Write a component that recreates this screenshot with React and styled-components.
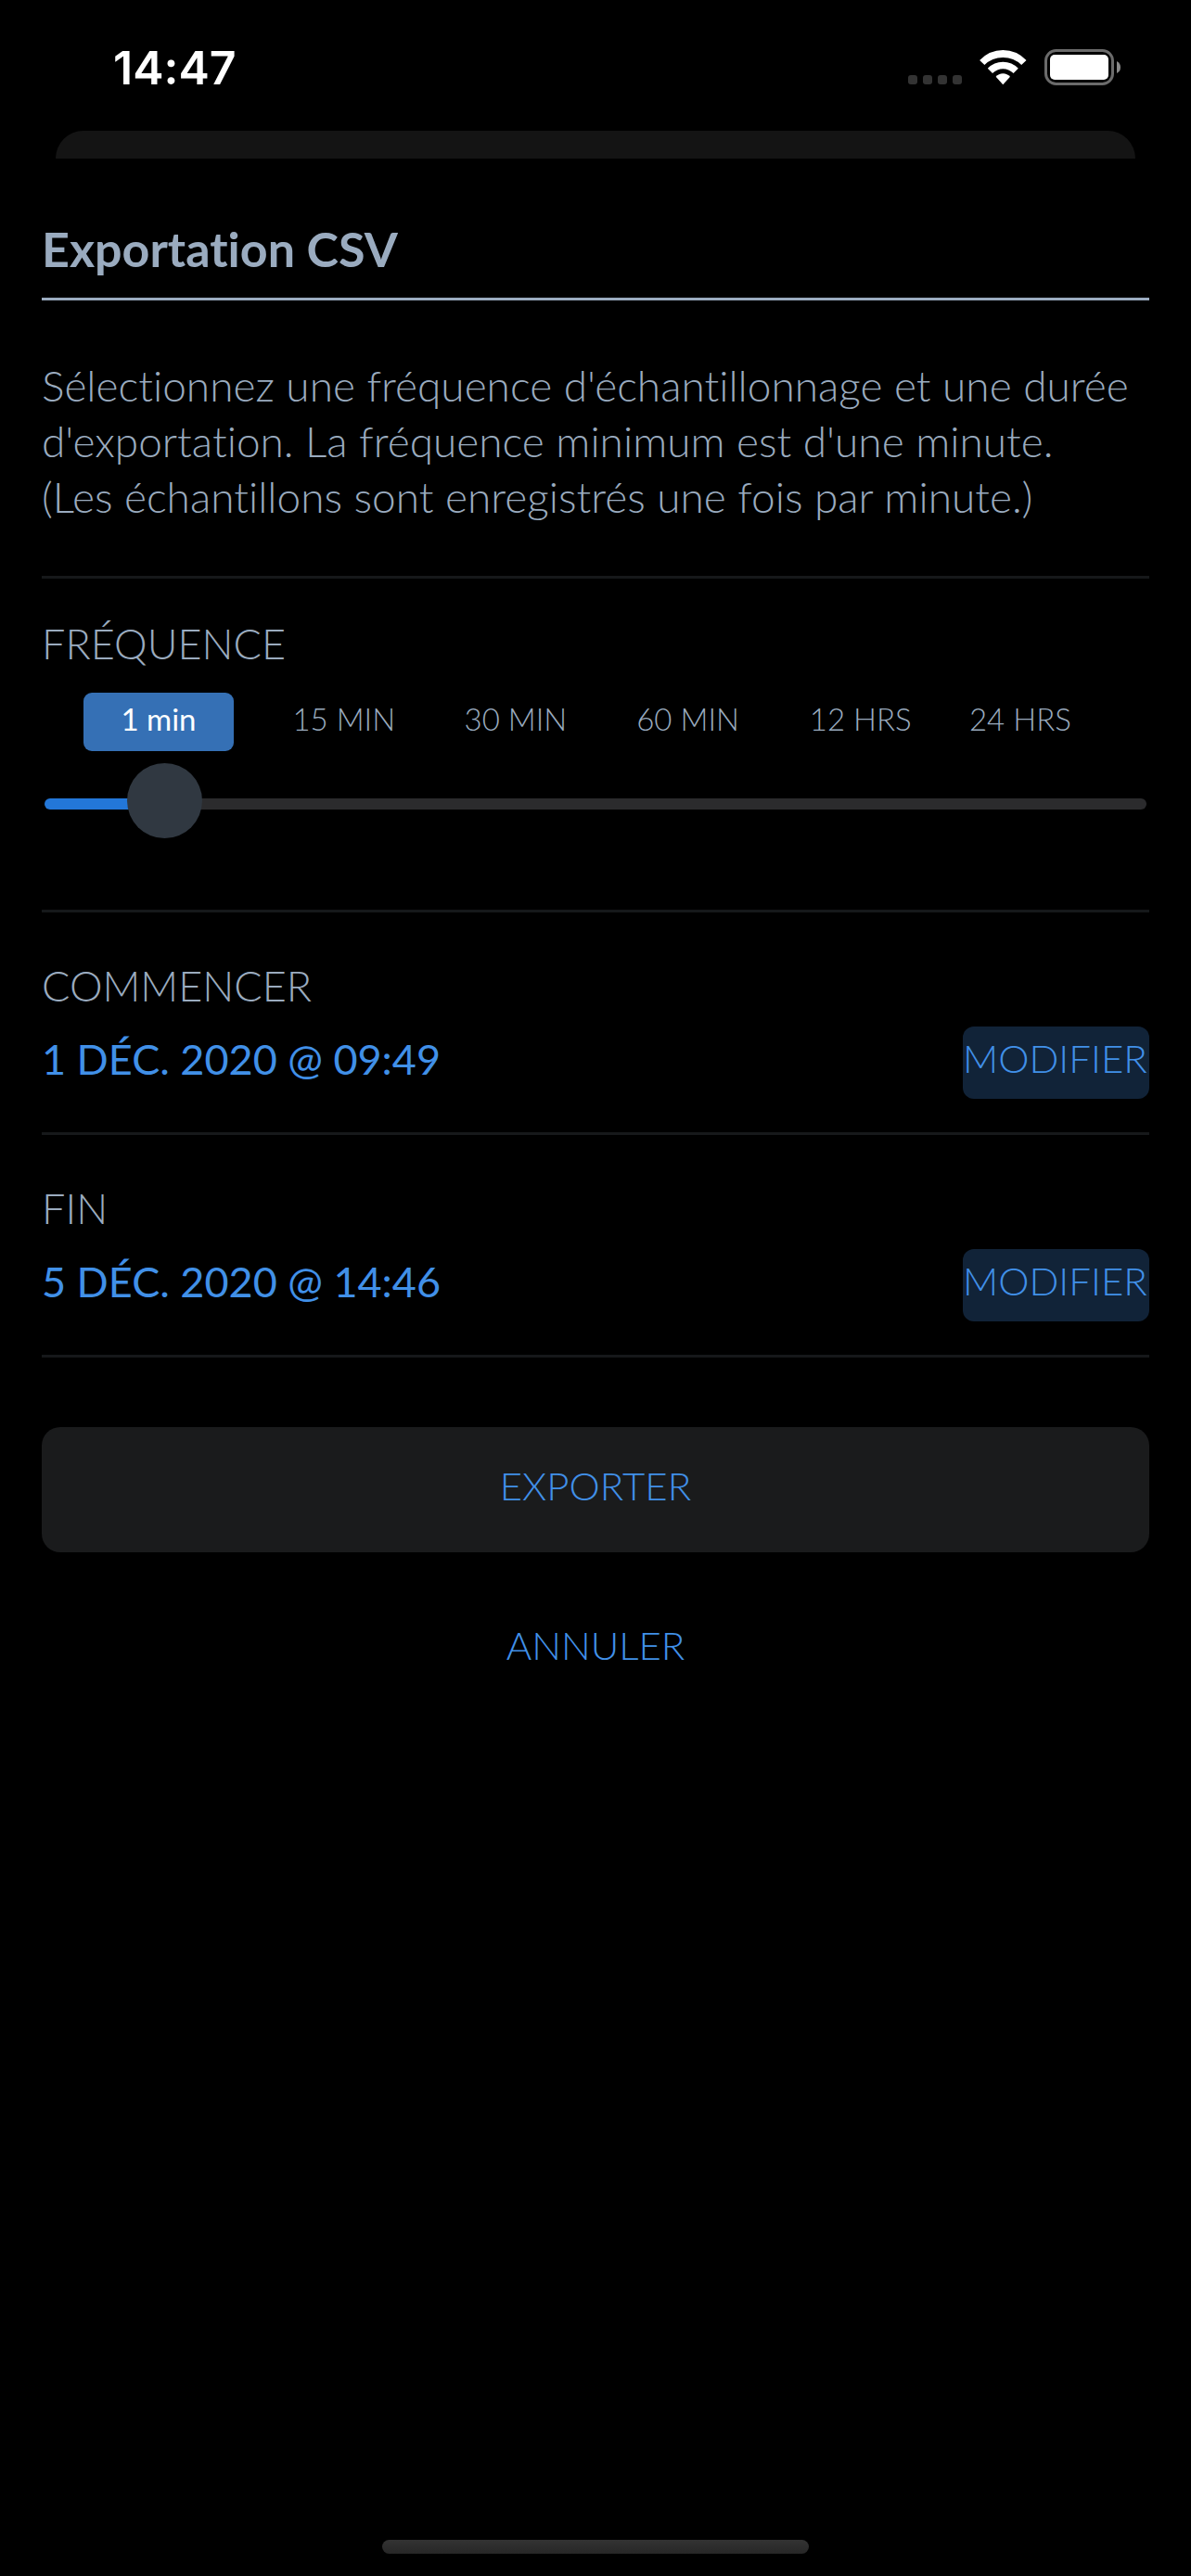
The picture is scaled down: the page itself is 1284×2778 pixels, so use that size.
import React from 'react'
import styled, { createGlobalStyle } from 'styled-components'

const frequencies = [
    { label: '1 min', value: 8 },
    { label: '15 MIN', value: 25 },
    { label: '30 MIN', value: 42 },
    { label: '60 MIN', value: 59 },
    { label: '12 HRS', value: 76 },
    { label: '24 HRS', value: 93 },
]

const dates = [
    { id: 'start', title: 'COMMENCER', date: '1 DÉC. 2020 @ 09:49' },
    { id: 'end', title: 'FIN', date: '5 DÉC. 2020 @ 14:46' },
]

const nearest = (position) =>
    frequencies.reduce((best, item) =>
        Math.abs(item.value - position) < Math.abs(best.value - position) ? item : best
    )

const StatusIcons = () => (
    <svg width="230" height="40" viewBox="0 0 230 40" aria-hidden="true">
        <g fill="#333">
            <rect x="0" y="28" width="10" height="10" rx="3" />
            <rect x="16" y="28" width="10" height="10" rx="3" />
            <rect x="32" y="28" width="10" height="10" rx="3" />
            <rect x="48" y="28" width="10" height="10" rx="3" />
        </g>
        <g fill="#fff">
            <path d="M102.300 1 Q117 1 127.500 12 L122.200 17 Q114 9 102.300 9 Q90.600 9 82.400 17 L77.100 12 Q87.600 1 102.300 1 Z" />
            <path d="M102.300 13.800 Q112 13.800 118.800 20.800 L113.600 26 Q108.500 21.300 102.300 21.300 Q96.100 21.300 91 26 L85.800 20.800 Q92.600 13.800 102.300 13.800 Z" />
            <path d="M102.300 26.300 Q107 26.300 110 29.800 L102.300 38.300 L94.600 29.800 Q97.600 26.300 102.300 26.300 Z" />
        </g>
        <rect x="148.500" y="1.500" width="72" height="36" rx="11" fill="none" stroke="#6b6b6b" strokeWidth="3" />
        <rect x="153" y="6" width="63" height="27" rx="5" fill="#fff" />
        <path d="M225 13 Q229 15 229 19.500 Q229 24 225 26 Z" fill="#8a8a8a" />
    </svg>
)

const App = () => {
    const [position, setPosition] = React.useState(8)
    const active = nearest(position)

    return (
        <Screen>
            <GlobalStyle />
            <StatusBar>
                <Time>14:47</Time>
                <StatusIcons />
            </StatusBar>
            <SheetBehind />
            <Sheet>
                <Title>Exportation CSV</Title>
                <Description>
                    Sélectionnez une fréquence d'échantillonnage et une durée
                    <br />
                    d'exportation. La fréquence minimum est d'une minute.
                    <br />
                    (Les échantillons sont enregistrés une fois par minute.)
                </Description>
                <FrequencySection>
                    <Label as="label" htmlFor="frequency">
                        FRÉQUENCE
                    </Label>
                    <Steps>
                        {frequencies.map((item) => (
                            <Step
                                key={item.label}
                                type="button"
                                $active={item === active}
                                onClick={() => setPosition(item.value)}
                            >
                                {item.label}
                            </Step>
                        ))}
                    </Steps>
                    <Slider
                        id="frequency"
                        type="range"
                        min="0"
                        max="100"
                        value={position}
                        style={{ '--fill': `${position}%` }}
                        onChange={(e) => setPosition(Number(e.target.value))}
                    />
                </FrequencySection>
                {dates.map((item) => (
                    <DateSection key={item.id}>
                        <Label id={item.id}>{item.title}</Label>
                        <DateRow>
                            <DateValue>{item.date}</DateValue>
                            <EditButton type="button" aria-describedby={item.id}>
                                MODIFIER
                            </EditButton>
                        </DateRow>
                    </DateSection>
                ))}
                <Actions>
                    <ActionButton type="button" $filled>
                        EXPORTER
                    </ActionButton>
                    <ActionButton type="button">ANNULER</ActionButton>
                </Actions>
            </Sheet>
            <HomeBar />
        </Screen>
    )
}

const GlobalStyle = createGlobalStyle`
    * {
        box-sizing: border-box;
    }
    body {
        margin: 0;
        background: #000;
    }
    button {
        border: 0;
        padding: 0;
        background: none;
        font-family: inherit;
        cursor: pointer;
    }
`

const Screen = styled.div`
    min-height: 100vh;
    display: flex;
    flex-direction: column;
    background: #000;
    color: #9aabbf;
    font-family: 'Lato', 'Liberation Sans', sans-serif;
    font-size: 45px;
    font-weight: 300;
    font-variant-ligatures: none;
`

const StatusBar = styled.header`
    height: 141px;
    display: flex;
    align-items: flex-start;
    justify-content: space-between;
    padding: 53px 75px 0 122px;
`

const Time = styled.div`
    color: #fff;
    font-family: 'Inter', sans-serif;
    font-size: 50px;
    font-weight: 600;
    line-height: 40px;
`

const SheetBehind = styled.div`
    height: 30px;
    margin: 0 60px;
    border-radius: 30px 30px 0 0;
    background: #141414;
`

const Sheet = styled.main`
    flex: 1;
    padding: 66px 45px 0;
`

const Title = styled.h1`
    margin: 0;
    padding-bottom: 22px;
    border-bottom: 3px solid #9aabbf;
    font-size: 52px;
    font-weight: 700;
    line-height: 62px;
`

const Description = styled.p`
    margin: 0;
    padding: 62px 0 55px;
    border-bottom: 3px solid #16181a;
    font-size: 46px;
    line-height: 60px;
`

const Label = styled.div`
    display: block;
    line-height: 60px;
`

const FrequencySection = styled.section`
    height: 360px;
    padding-top: 40px;
    border-bottom: 3px solid #16181a;
`

const Steps = styled.div`
    display: grid;
    grid-template-columns: 188fr 185fr 185fr 186fr 186fr 158fr;
    margin-top: 23px;
    padding: 0 60px 0 45px;
`

const Step = styled.button`
    width: ${(props) => (props.$active ? '162px' : 'auto')};
    height: 63px;
    padding-bottom: 8px;
    border-radius: 9px;
    background: ${(props) => (props.$active ? '#3570b5' : 'none')};
    color: ${(props) => (props.$active ? '#fff' : '#9aabbf')};
    font-size: 33px;
    font-weight: ${(props) => (props.$active ? 400 : 300)};
`

const Slider = styled.input`
    appearance: none;
    display: block;
    width: calc(100% - 6px);
    height: 81px;
    margin: 16px 3px 0;
    background: none;

    &::-webkit-slider-runnable-track {
        height: 12px;
        border-radius: 6px;
        background: linear-gradient(to right, #2377d8 var(--fill), #2b2b2d var(--fill));
    }

    &::-webkit-slider-thumb {
        appearance: none;
        width: 81px;
        height: 81px;
        margin-top: -38px;
        border-radius: 50%;
        background: #303841;
    }
`

const DateSection = styled.section`
    height: 240px;
    padding-top: 49px;
    border-bottom: 3px solid #16181a;
`

const DateRow = styled.div`
    display: flex;
    justify-content: space-between;
    margin-top: 14px;
`

const DateValue = styled.div`
    color: #4190e8;
    font-weight: 400;
    line-height: 70px;
`

const EditButton = styled.button`
    width: 201px;
    height: 78px;
    padding: 0 3px 10px 0;
    border-radius: 12px;
    background: #112338;
    color: #4190e8;
    font-size: 42px;
    font-weight: 300;
`

const Actions = styled.div`
    display: flex;
    flex-direction: column;
    gap: 37px;
    padding-top: 75px;
`

const ActionButton = styled.button`
    height: 135px;
    padding-bottom: 9px;
    border-radius: 20px;
    background: ${(props) => (props.$filled ? '#1a1b1c' : 'none')};
    color: #4190e8;
    font-size: 42px;
    font-weight: 300;
`

const HomeBar = styled.div`
    width: 460px;
    height: 15px;
    margin: 0 auto 24px;
    border-radius: 8px;
    background: linear-gradient(#333, #272727);
`

export default App
